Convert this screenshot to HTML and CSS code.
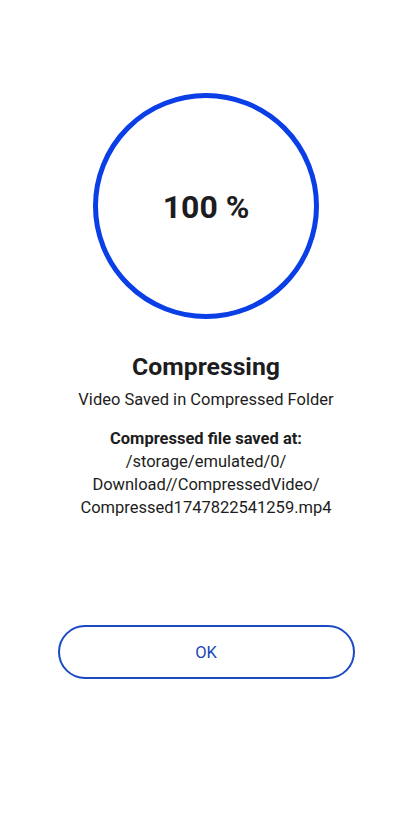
FILE: index.html
```html
<!DOCTYPE html>
<html>
<head>
  <meta charset="utf-8">
  <title>Compressing</title>
  <link rel="stylesheet" href="styles.css">
</head>
<body>
  <div class="screen">
    <div class="progress-ring">
      <span class="progress-value">100 %</span>
    </div>

    <h1 class="title">Compressing</h1>
    <p class="subtitle">Video Saved in Compressed Folder</p>

    <div class="saved-info">
      <div class="saved-label">Compressed file saved at:</div>
      <div class="saved-path">/storage/emulated/0/<br>Download//CompressedVideo/<br>Compressed1747822541259.mp4</div>
    </div>

    <button class="ok-button">OK</button>
  </div>
</body>
</html>
```

FILE: styles.css
```css
body {
  font-family: Roboto, "Noto Sans", sans-serif;
  margin: 0;
  background-color: #fff;
  color: #1d1d21;
}

.screen {
  display: flex;
  flex-direction: column;
  align-items: center;
  width: 412px;
  height: 826px;
  padding-top: 93px;
  box-sizing: border-box;
}

.progress-ring {
  display: flex;
  align-items: center;
  justify-content: center;
  width: 226px;
  height: 226px;
  border: 5px solid #0a3ee6;
  border-radius: 50%;
  box-sizing: border-box;
}

.progress-value {
  font-size: 32px;
  font-weight: bold;
  margin-top: 2px;
}

.title {
  font-size: 24.8px;
  font-weight: bold;
  margin: 34px 0 0;
  line-height: 28px;
}

.subtitle {
  font-size: 16.5px;
  margin: 8px 0 0;
  line-height: 22px;
}

.saved-info {
  margin-top: 15.5px;
  text-align: center;
  font-size: 16.5px;
  line-height: 23px;
}

.saved-label {
  font-weight: bold;
}

.ok-button {
  margin-top: 106.5px;
  width: 297px;
  height: 54px;
  border: 2px solid #1a4bc4;
  border-radius: 27px;
  background-color: #fff;
  color: #1a47b8;
  font-family: Roboto, sans-serif;
  font-size: 16.5px;
  cursor: pointer;
}
```
